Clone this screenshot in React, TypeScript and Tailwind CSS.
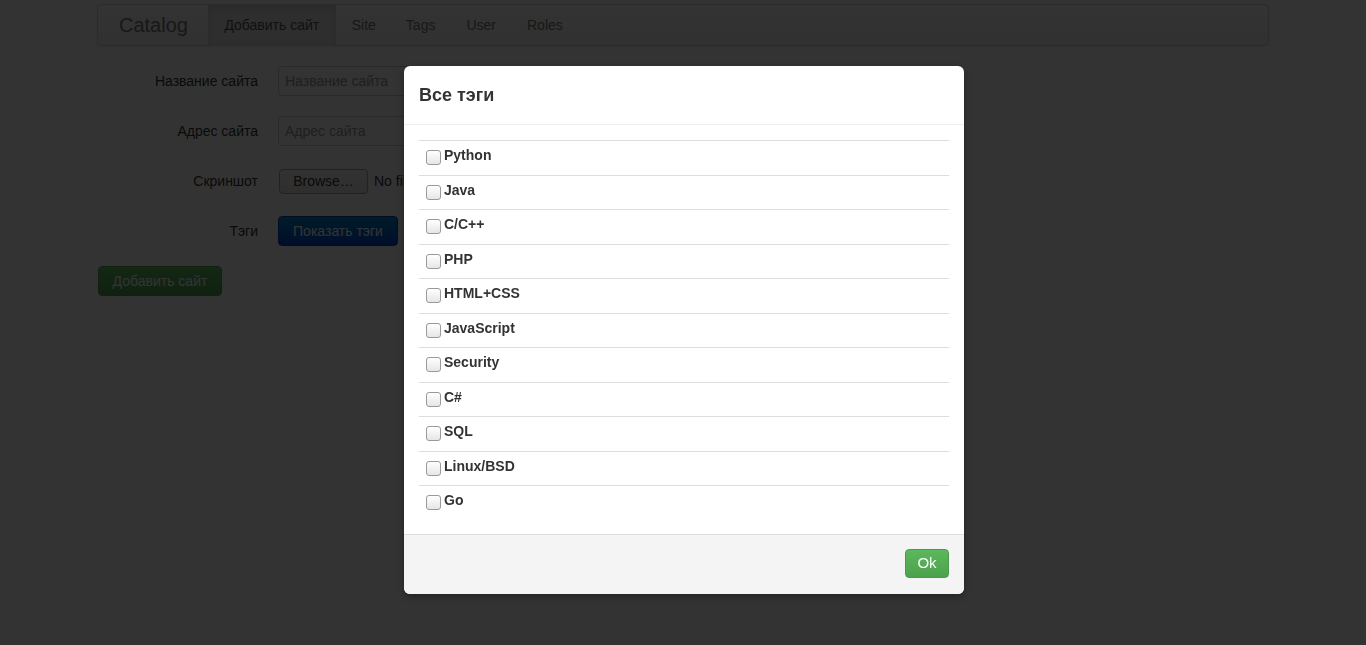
const tags = ["Python", "Java", "C/C++", "PHP", "HTML+CSS", "JavaScript", "Security", "C#", "SQL", "Linux/BSD", "Go"];

function Checkbox() {
  return (
    <span className="mt-[5px] inline-block h-[15px] w-[15px] shrink-0 rounded-[3px] border border-[#9a9a9a] bg-gradient-to-b from-[#ffffff] to-[#e6e6e6]" />
  );
}

export default function App() {
  return (
    <div className="relative min-h-[645px] bg-white font-['Liberation_Sans',Arial,sans-serif] text-[14px] text-[#333]">
      <div className="mx-auto w-[1172px] pt-[4px]">
        <div className="flex h-[42px] items-stretch rounded-[4px] border border-[#d4d4d4] bg-gradient-to-b from-[#ffffff] to-[#f2f2f2] shadow-[0_1px_4px_rgba(0,0,0,0.065)]">
          <div className="flex items-center pl-[21px] pr-[20px] text-[20px] text-[#777]">Catalog</div>
          <div className="flex items-center bg-[#e5e5e5] px-[16.5px] text-[#555] shadow-[inset_0_3px_8px_rgba(0,0,0,0.125)]">Добавить сайт</div>
          <div className="flex items-center pl-[16px] pr-[15px] text-[#777]">Site</div>
          <div className="flex items-center px-[15px] text-[#777]">Tags</div>
          <div className="flex items-center px-[16px] text-[#777]">User</div>
          <div className="flex items-center px-[15px] text-[#777]">Roles</div>
        </div>

        <div className="mt-[20px] flex flex-col gap-[20px] pl-[1px]">
          <div className="flex h-[30px] items-center">
            <div className="w-[160px] text-right">Название сайта</div>
            <div className="ml-[20px] flex h-[30px] w-[206px] items-center rounded-[4px] border border-[#ccc] px-[6px] text-[#999]">Название сайта</div>
          </div>
          <div className="flex h-[30px] items-center">
            <div className="w-[160px] text-right">Адрес сайта</div>
            <div className="ml-[20px] flex h-[30px] w-[206px] items-center rounded-[4px] border border-[#ccc] px-[6px] text-[#999]">Адрес сайта</div>
          </div>
          <div className="flex h-[30px] items-center">
            <div className="w-[160px] text-right">Скриншот</div>
            <div className="ml-[21px] flex h-[25px] w-[89px] items-center justify-center rounded-[4px] border border-[#aaa] bg-gradient-to-b from-[#fafafa] to-[#e6e6e6]">Browse…</div>
            <div className="ml-[6px] w-[30px] overflow-hidden whitespace-nowrap">No file selected.</div>
          </div>
          <div className="flex h-[30px] items-center">
            <div className="w-[160px] text-right">Тэги</div>
            <div className="ml-[20px] flex h-[30px] w-[120px] items-center justify-center rounded-[4px] border border-[#0044cc] bg-gradient-to-b from-[#0088cc] to-[#0044cc] text-white">Показать тэги</div>
          </div>
          <div className="flex h-[30px] w-[124px] items-center justify-center rounded-[4px] border border-[#51a351] bg-gradient-to-b from-[#62c462] to-[#51a351] text-white">Добавить сайт</div>
        </div>
      </div>

      <div className="fixed inset-0 bg-black/80" />

      <div className="absolute left-[404px] top-[66px] w-[560px] rounded-[6px] bg-white shadow-[0_3px_7px_rgba(0,0,0,0.3)]">
        <div className="flex h-[59px] items-center border-b border-[#eee] px-[15px]">
          <h3 className="text-[18px] font-bold text-[#333]">Все тэги</h3>
        </div>
        <div className="px-[15px] pb-[14px] pt-[15px]">
          {tags.map((t) => (
            <div key={t} className="flex h-[34.5px] items-start gap-[3px] border-t border-[#ddd] pl-[7px] pt-[4px]">
              <Checkbox />
              <span className="font-bold leading-[20px] text-[#333]">{t}</span>
            </div>
          ))}
        </div>
        <div className="flex h-[60px] items-center justify-end rounded-b-[6px] border-t border-[#ddd] bg-[#f4f4f4] px-[15px] pb-[1px]">
          <div className="flex h-[29px] w-[44px] items-center justify-center rounded-[4px] border border-[#4a9a4a] bg-gradient-to-b from-[#5cb85c] to-[#4ca24c] text-[15px] text-white">Ok</div>
        </div>
      </div>
    </div>
  );
}
